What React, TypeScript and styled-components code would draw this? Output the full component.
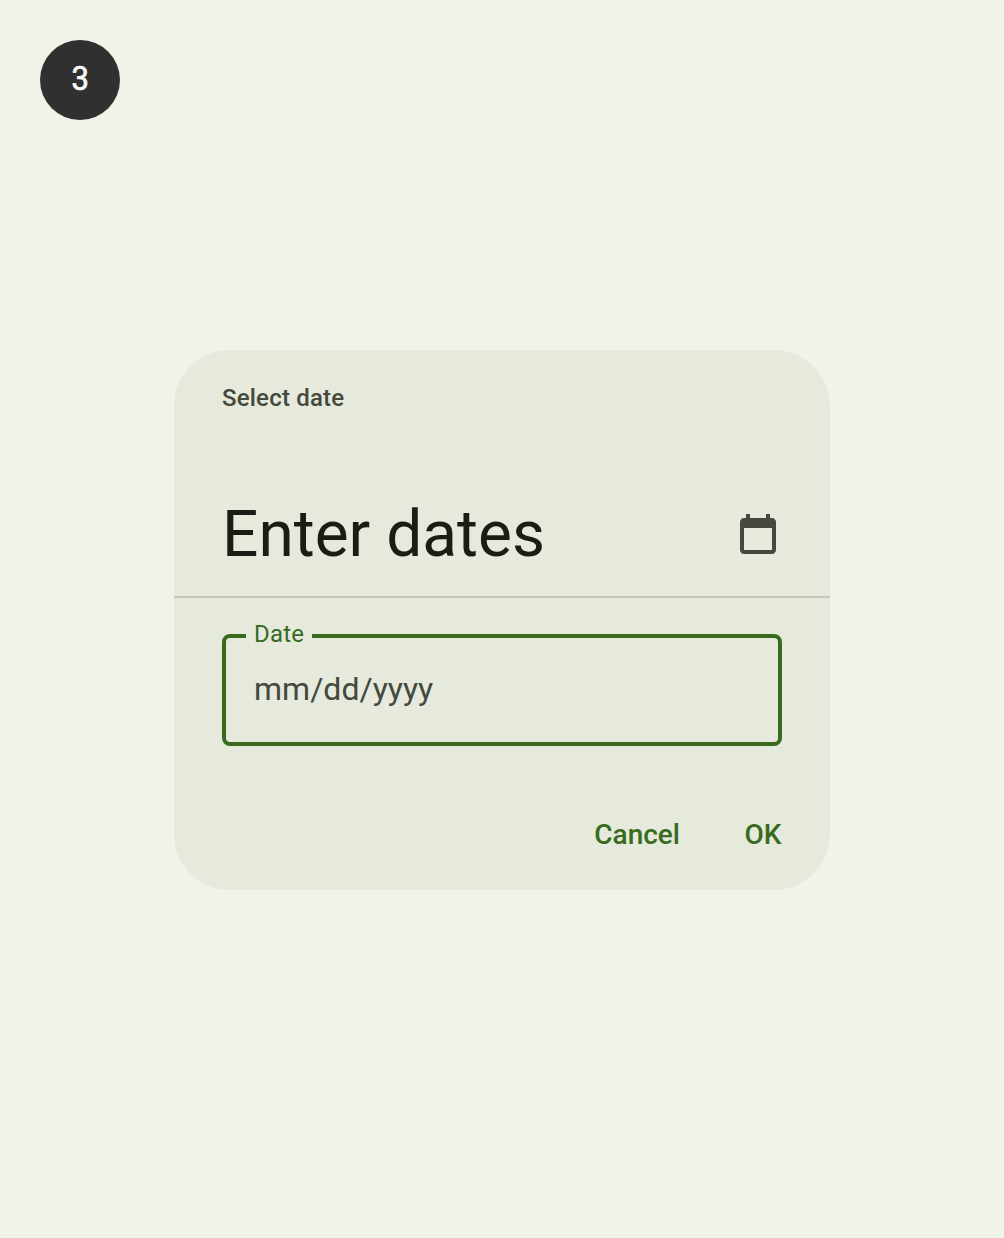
import React from "react";
import styled, { createGlobalStyle } from "styled-components";

const GlobalStyle = createGlobalStyle`
  *, *::before, *::after { box-sizing: border-box; }
  body { margin: 0; background: #f0f3e8; }
`;

const Page = styled.main`
  min-height: 1238px;
  padding: 40px;
  display: flex;
  flex-direction: column;
  align-items: center;
  background: #f0f3e8;
  font-family: Roboto, "Noto Sans", sans-serif;
`;

const StepBadge = styled.div`
  width: 80px;
  height: 80px;
  align-self: flex-start;
  display: flex;
  align-items: center;
  justify-content: center;
  padding: 0 0 3px 1px;
  border-radius: 50%;
  background: #303030;
  color: #f8f8f8;
  font-size: 33px;
  font-weight: 400;
  line-height: 40px;
`;

const BadgeDigit = styled.span`
  display: block;
  transform: scaleX(0.94);
  -webkit-text-stroke: 0.7px currentColor;
`;

const Dialog = styled.section`
  width: 656px;
  height: 540px;
  margin-top: 230px;
  display: flex;
  flex-direction: column;
  border-radius: 56px;
  background: #e5eadc;
`;

const Header = styled.header`
  height: 248px;
  padding: 32px 48px 0;
  border-bottom: 2px solid #c3c8bb;
`;

const Supporting = styled.div`
  color: #44483d;
  font-size: 24px;
  font-weight: 500;
  line-height: 32px;
  letter-spacing: 0.2px;
`;

const HeadlineRow = styled.div`
  margin-top: 80px;
  display: flex;
  align-items: center;
  justify-content: space-between;
`;

const Headline = styled.h1`
  margin: 0;
  padding-top: 2px;
  color: #1a1c16;
  font-size: 64px;
  font-weight: 400;
  line-height: 78px;
`;

const IconButton = styled.button`
  width: 48px;
  height: 48px;
  padding: 0;
  border: 0;
  background: none;
  color: #44483d;
`;

const Field = styled.fieldset`
  height: 124px;
  margin: 24px 48px 0;
  padding: 0 28px;
  border: 4px solid #386b1d;
  border-radius: 8px;
  min-width: 0;
`;

const Label = styled.legend`
  margin-left: -8px;
  padding: 0 8px 4px;
  color: #386b1d;
  font-size: 24px;
  line-height: 24px;
  letter-spacing: 0.2px;
`;

const DateInput = styled.div`
  padding-top: 15px;
  color: #44483d;
  font-size: 32px;
  line-height: 48px;
`;

const Actions = styled.footer`
  margin-top: 69px;
  padding: 0 48.5px 0 48px;
  display: flex;
  justify-content: flex-end;
  gap: 64.5px;
`;

const Action = styled.button`
  padding: 0;
  border: 0;
  background: none;
  color: #386b1d;
  font: 500 28px/40px Roboto, sans-serif;
`;

export default function App() {
  return (
    <>
      <GlobalStyle />
      <Page>
        <StepBadge>
          <BadgeDigit>3</BadgeDigit>
        </StepBadge>
        <Dialog>
          <Header>
            <Supporting>Select date</Supporting>
            <HeadlineRow>
              <Headline>Enter dates</Headline>
              <IconButton aria-label="Calendar">
                <svg width="48" height="48" viewBox="0 0 24 24" fill="currentColor">
                  <path d="M19 4h-1V2h-2v2H8V2H6v2H5c-1.1 0-2 .9-2 2v14c0 1.1.9 2 2 2h14c1.1 0 2-.9 2-2V6c0-1.1-.9-2-2-2zm0 16H5V9h14v11z" />
                </svg>
              </IconButton>
            </HeadlineRow>
          </Header>
          <Field>
            <Label>Date</Label>
            <DateInput>mm/dd/yyyy</DateInput>
          </Field>
          <Actions>
            <Action>Cancel</Action>
            <Action>OK</Action>
          </Actions>
        </Dialog>
      </Page>
    </>
  );
}
